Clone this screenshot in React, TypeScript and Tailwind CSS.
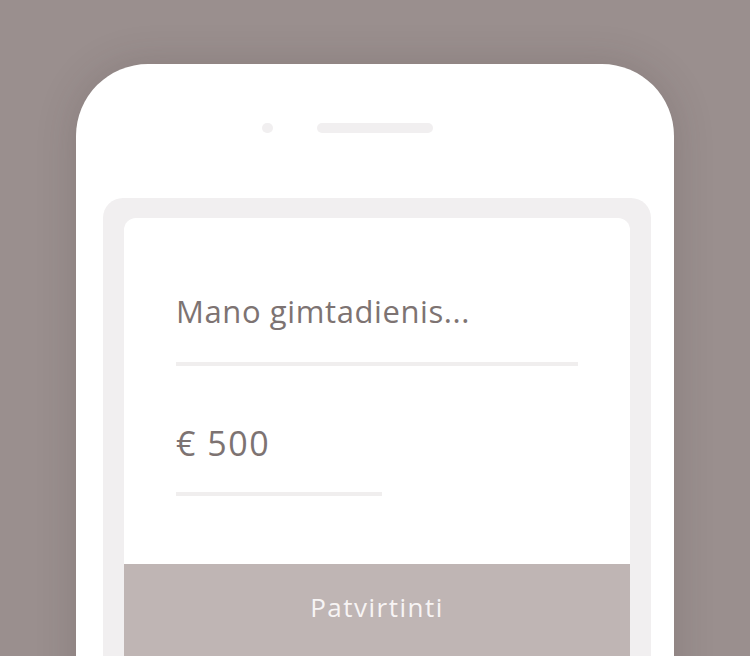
export default function App() {
  return (
    <div className="w-[750px] h-[656px] overflow-hidden bg-[#9a8f8e] pt-[64px] pl-[76px]" style={{ fontFamily: "'Open Sans', Lato, sans-serif" }}>
      <div className="w-[598px] h-[700px] bg-white rounded-t-[72px] shadow-[0_0_40px_rgba(60,45,45,0.18)] pl-[27px] pt-[59px]">
        <div className="flex items-center h-[10px] pl-[159px]">
          <div className="w-[11px] h-[10px] rounded-full bg-[#f1eff0]" />
          <div className="ml-[44px] w-[116px] h-[10px] rounded-full bg-[#f1eff0]" />
        </div>
        <div className="mt-[65px] w-[548px] bg-[#f1eff0] rounded-t-[20px] px-[21px] pt-[20px] h-[520px]">
          <div className="bg-white rounded-t-[12px] h-[500px] flex flex-col">
            <div className="px-[52px] pt-[78px] text-[#7d7372]">
              <div className="text-[31px] leading-[31px] tracking-[0.6px]">Mano gimtadienis...</div>
              <div className="mt-[35px] h-[4px] bg-[#f0eeee]" />
              <div className="mt-[60px] text-[34px] leading-[34px] tracking-[1.5px]">€ 500</div>
              <div className="mt-[32px] h-[4px] w-[206px] bg-[#f0eeee]" />
            </div>
            <div className="mt-[68px] bg-[#bfb5b4] flex-1 pt-[30px] text-center text-[26px] leading-[26px] tracking-[1.5px] text-[#f7f4f4]">
              Patvirtinti
            </div>
          </div>
        </div>
      </div>
    </div>
  );
}
